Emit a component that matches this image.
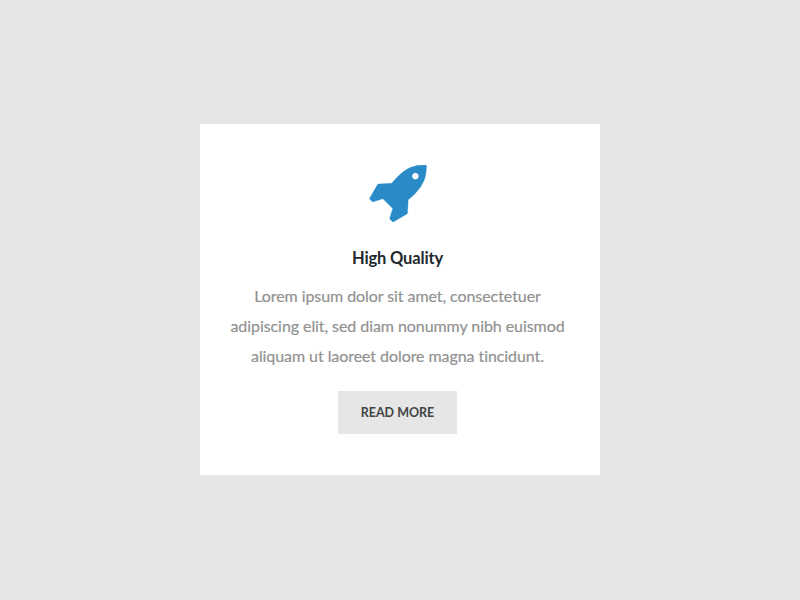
<main>
  <article class="card">
    <svg class="icon" viewBox="0 0 1664 1664" aria-hidden="true">
      <path d="M1440 320q0-40-28-68t-68-28-68 28-28 68 28 68 68 28 68-28 28-68zm224-288q0 249-75.500 430.500t-253.500 360.500q-81 80-195 176l-20 379q-2 16-16 26l-384 224q-7 4-16 4-12 0-23-9l-64-64q-13-14-8-32l85-276-281-281-276 85q-3 1-9 1-14 0-23-9l-64-64q-17-19-5-39l224-384q10-14 26-16l379-20q96-114 176-195 188-187 358-258t431-71q14 0 24 9.500t10 22.500z" />
    </svg>
    <h2>High Quality</h2>
    <p>Lorem ipsum dolor sit amet, consectetuer<br />adipiscing elit, sed diam nonummy nibh euismod<br />aliquam ut laoreet dolore magna tincidunt.</p>
    <button type="button">READ MORE</button>
  </article>
</main>

<style>
  :global(body) {
    margin: 0;
  }
  main {
    box-sizing: border-box;
    height: 600px;
    padding-top: 124px;
    background: #e6e6e6;
    font-family: Lato, sans-serif;
  }
  .card {
    box-sizing: border-box;
    display: flex;
    flex-direction: column;
    align-items: center;
    width: 400px;
    height: 351px;
    margin: 0 auto;
    padding: 41px 10px 0 5px;
    background: #fff;
    text-align: center;
  }
  .icon {
    width: 59px;
    height: 58px;
    fill: #288bc8;
  }
  .icon path {
    stroke: #288bc8;
    stroke-width: 8px;
  }
  h2 {
    margin: 25px 0 0;
    color: #22282d;
    font-size: 16.5px;
    font-weight: 700;
    letter-spacing: -0.15px;
    line-height: 20px;
  }
  p {
    margin: 13px 0 0;
    color: #929292;
    font-size: 16px;
    letter-spacing: -0.07px;
    line-height: 30px;
    white-space: nowrap;
    -webkit-text-stroke: 0.2px #929292;
  }
  button {
    width: 119px;
    height: 43px;
    margin: 20px 0 0;
    padding: 0 0 1px;
    border: 0;
    background: #e6e6e6;
    color: #444;
    font-family: inherit;
    font-size: 12.5px;
    font-weight: 700;
  }
</style>
